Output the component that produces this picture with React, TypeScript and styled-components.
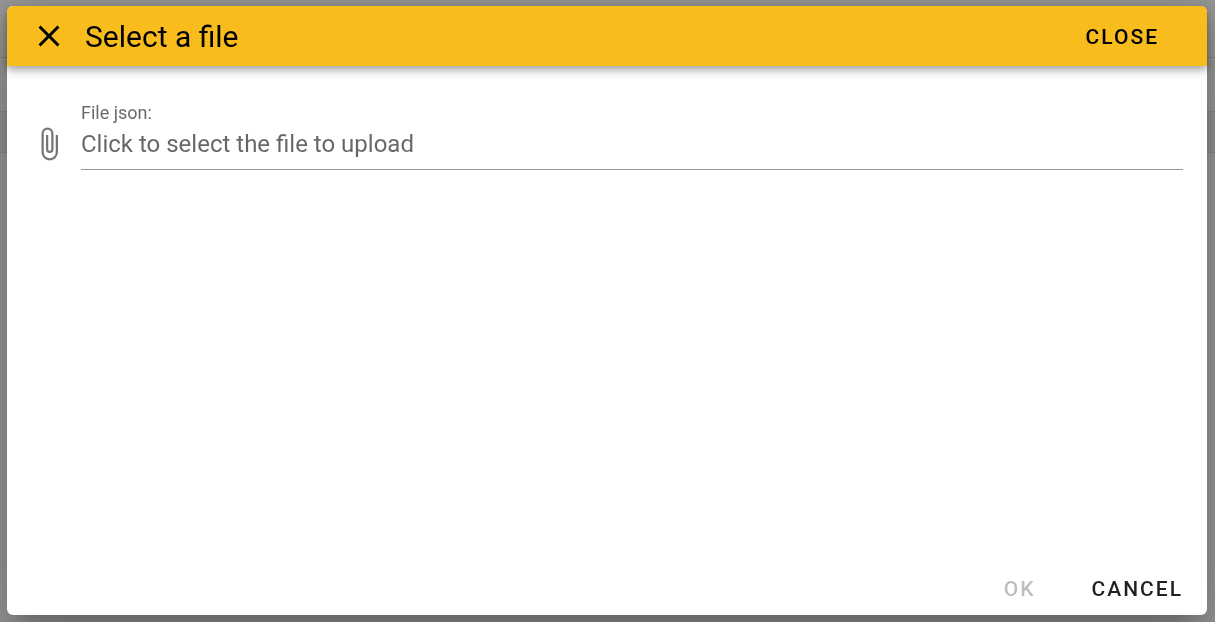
import React, { useRef, useState } from "react";
import styled, { createGlobalStyle } from "styled-components";

const GlobalStyle = createGlobalStyle`
  * { box-sizing: border-box; }
  body {
    margin: 0;
    background: #fff;
    font-family: Roboto, sans-serif;
    overflow: hidden;
  }
`;

const Page = styled.div`
  min-height: 100vh;
  background: #fff;
`;

const PageRow = styled.div<{ $height: number; $shaded?: boolean }>`
  height: ${(p) => p.$height}px;
  background: ${(p) => (p.$shaded ? "#f2f2f2" : "#fff")};
  border-bottom: 1px solid #dadada;
`;

const Scrim = styled.div`
  position: fixed;
  inset: 0;
  display: flex;
  padding: 6px 8px 7px 7px;
  background: rgba(33, 33, 33, 0.46);
`;

const Dialog = styled.section`
  flex: 1;
  display: flex;
  flex-direction: column;
  border-radius: 6px;
  background: #fff;
  box-shadow:
    0 16px 22px -10px rgba(0, 0, 0, 0.2),
    0 36px 57px 4px rgba(0, 0, 0, 0.14),
    0 14px 69px 12px rgba(0, 0, 0, 0.12);
`;

const Toolbar = styled.header`
  display: flex;
  align-items: center;
  height: 60px;
  padding: 0 24px;
  border-radius: 6px 6px 0 0;
  background: #f8bc1c;
  box-shadow:
    0 3px 6px -1px rgba(0, 0, 0, 0.2),
    0 6px 8px rgba(0, 0, 0, 0.14),
    0 1px 15px rgba(0, 0, 0, 0.12);
`;

const IconButton = styled.button`
  display: flex;
  width: 36px;
  height: 36px;
  padding: 0;
  border: 0;
  background: none;
  color: #000;
  cursor: pointer;
`;

const Icon = styled.svg`
  width: 36px;
  height: 36px;
  fill: currentColor;
`;

const Title = styled.h1`
  flex: 1;
  margin: 0 0 0 18px;
  padding-top: 2px;
  font-size: 30px;
  line-height: 36px;
  font-weight: 400;
  color: #000;
`;

const TextButton = styled.button<{ $color?: string }>`
  height: 54px;
  padding: 2px 24px 0;
  border: 0;
  background: none;
  font-family: inherit;
  font-size: 21px;
  line-height: 24px;
  font-weight: 500;
  letter-spacing: 2px;
  text-transform: uppercase;
  color: ${(p) => p.$color ?? "rgba(0, 0, 0, 0.87)"};
  cursor: pointer;
  &:disabled {
    color: rgba(0, 0, 0, 0.26);
    cursor: default;
  }
`;

const Content = styled.div`
  flex: 1;
  padding: 37px 24px 0 24px;
`;

const FileField = styled.div`
  display: flex;
  align-items: flex-end;
  color: rgba(0, 0, 0, 0.6);
`;

const Clip = styled.span`
  display: flex;
  width: 50px;
  padding-bottom: 8px;
  color: rgba(0, 0, 0, 0.54);
`;

const Field = styled.div`
  flex: 1;
  display: flex;
  flex-direction: column;
  border-bottom: 1px solid #949494;
`;

const Label = styled.label`
  font-size: 18px;
  line-height: 20px;
`;

const FileName = styled.input`
  width: 100%;
  height: 46px;
  padding: 0 0 4px;
  border: 0;
  outline: 0;
  background: none;
  font-family: inherit;
  font-size: 24px;
  line-height: 30px;
  color: rgba(0, 0, 0, 0.87);
  cursor: pointer;
  &::placeholder {
    color: rgba(0, 0, 0, 0.6);
    opacity: 1;
  }
`;

const Actions = styled.footer`
  display: flex;
  justify-content: flex-end;
  gap: 8px;
`;

const CLOSE_PATH =
  "M19,6.41L17.59,5L12,10.59L6.41,5L5,6.41L10.59,12L5,17.59L6.41,19L12,13.41L17.59,19L19,17.59L13.41,12L19,6.41Z";
const PAPERCLIP_PATH =
  "M16.5,6V17.5A4,4 0 0,1 12.5,21.5A4,4 0 0,1 8.5,17.5V5A2.5,2.5 0 0,1 11,2.5A2.5,2.5 0 0,1 13.5,5V15.5A1,1 0 0,1 12.5,16.5A1,1 0 0,1 11.5,15.5V6H10V15.5A2.5,2.5 0 0,0 12.5,18A2.5,2.5 0 0,0 15,15.5V5A4,4 0 0,0 11,1A4,4 0 0,0 7,5V17.5A5.5,5.5 0 0,0 12.5,23A5.5,5.5 0 0,0 18,17.5V6H16.5Z";

export default function App() {
  const [fileName, setFileName] = useState("");
  const picker = useRef<HTMLInputElement>(null);

  return (
    <>
      <GlobalStyle />
      <Page>
        <PageRow $height={58} />
        <PageRow $height={54} />
        <PageRow $height={41} $shaded />
      </Page>
      <Scrim>
        <Dialog role="dialog" aria-modal="true" aria-labelledby="dialog-title">
          <Toolbar>
            <IconButton type="button" aria-label="Close">
              <Icon viewBox="0 0 24 24" aria-hidden="true">
                <path d={CLOSE_PATH} />
              </Icon>
            </IconButton>
            <Title id="dialog-title">Select a file</Title>
            <TextButton type="button" $color="#000">Close</TextButton>
          </Toolbar>
          <Content>
            <FileField>
              <Clip>
                <Icon viewBox="0 0 24 24" aria-hidden="true">
                  <path d={PAPERCLIP_PATH} />
                </Icon>
              </Clip>
              <Field>
                <Label htmlFor="file-name">File json:</Label>
                <FileName
                  id="file-name"
                  readOnly
                  value={fileName}
                  placeholder="Click to select the file to upload"
                  onClick={() => picker.current?.click()}
                />
                <input
                  ref={picker}
                  type="file"
                  accept="application/json"
                  hidden
                  onChange={(e) => setFileName(e.target.files?.[0]?.name ?? "")}
                />
              </Field>
            </FileField>
          </Content>
          <Actions>
            <TextButton type="button" disabled={!fileName}>Ok</TextButton>
            <TextButton type="button">Cancel</TextButton>
          </Actions>
        </Dialog>
      </Scrim>
    </>
  );
}
